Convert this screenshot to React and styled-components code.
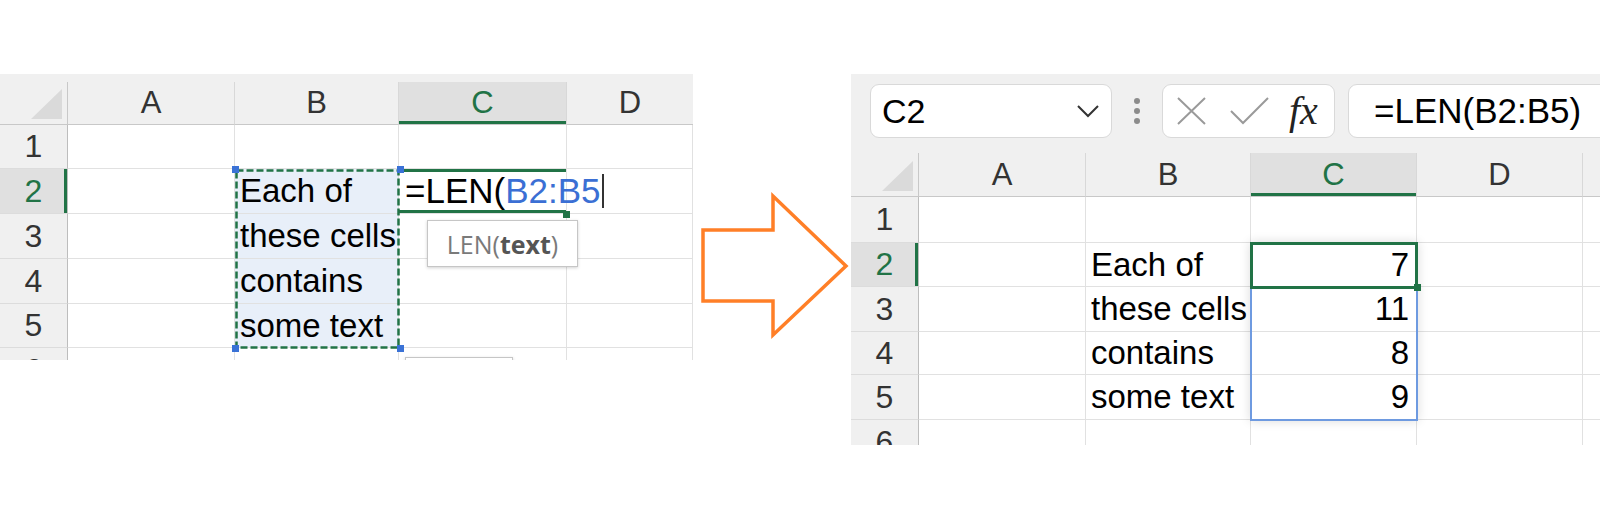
import React from "react";
import styled, { createGlobalStyle, css } from "styled-components";

const GlobalStyle = createGlobalStyle`
  *, *::before, *::after { box-sizing: border-box; }
  html, body { margin: 0; padding: 0; background: #fff; }
  body { font-family: "Liberation Sans", Arial, sans-serif; }
`;

const GREEN = "#217346";
const HEAD_BG = "#f0f0f0";
const GRID = "#e1e1e1";

const Page = styled.div`
  width: 1600px;
  height: 520px;
  display: flex;
  align-items: flex-start;
  padding-top: 74px;
  overflow: hidden;
`;

const LeftPanel = styled.div`
  width: 693px;
  flex: none;
`;

const Strip = styled.div`
  height: 8px;
  background: ${HEAD_BG};
`;

const Sheet = styled.div`
  position: relative;
  display: grid;
  grid-template-columns: ${(p) => p.$cols};
  grid-template-rows: ${(p) => p.$rows};
  height: ${(p) => p.$height}px;
  overflow: hidden;
  background: #fff;
`;

const Corner = styled.div`
  position: relative;
  background: ${HEAD_BG};
  border-right: 1px solid #c8c8c8;
  border-bottom: 1px solid #c8c8c8;
  &::after {
    content: "";
    position: absolute;
    right: 5px;
    bottom: 5px;
    width: 31px;
    height: 30px;
    background: #dadada;
    clip-path: polygon(100% 0, 100% 100%, 0 100%);
  }
`;

const ColHead = styled.div`
  display: flex;
  align-items: center;
  justify-content: center;
  font-size: 31px;
  color: #333;
  background: ${HEAD_BG};
  border-right: 1px solid #d8d8d8;
  border-bottom: 1px solid #c8c8c8;
  ${(p) =>
    p.$active &&
    css`
      background: #e0e0e0;
      color: ${GREEN};
      box-shadow: inset 0 -3px 0 ${GREEN};
    `}
  ${(p) => p.$last && css`border-right: none;`}
`;

const RowHead = styled.div`
  display: flex;
  align-items: center;
  justify-content: center;
  font-size: 32px;
  color: #333;
  background: ${HEAD_BG};
  border-right: 1px solid #bdbdbd;
  border-bottom: 1px solid #dcdcdc;
  ${(p) =>
    p.$active &&
    css`
      background: #e0e0e0;
      color: ${GREEN};
      box-shadow: inset -3px 0 0 ${GREEN};
    `}
`;

const Cell = styled.div`
  display: flex;
  align-items: center;
  justify-content: ${(p) => (p.$right ? "flex-end" : "flex-start")};
  padding: 0 7px 0 5px;
  font-size: 33px;
  color: #000;
  white-space: nowrap;
  background: ${(p) => (p.$tint ? "#e8eff9" : "transparent")};
  border-right: 1px solid ${GRID};
  border-bottom: 1px solid ${GRID};
  ${(p) =>
    p.$editing &&
    css`
      position: relative;
      z-index: 1;
      padding-left: 6px;
      box-shadow: inset 0 3px 0 ${GREEN}, inset 0 -3px 0 ${GREEN};
    `}
`;

const Formula = styled.span`
  display: inline-flex;
  flex: none;
  align-items: center;
  font-size: 35px;
  color: #000;
`;

const Ref = styled.span`
  color: #3b6fd4;
`;

const Caret = styled.span`
  display: inline-block;
  width: 2px;
  height: 34px;
  margin-left: 1px;
  background: #333;
`;

const Ants = styled.svg`
  position: absolute;
  left: ${(p) => p.$x}px;
  top: ${(p) => p.$y}px;
  overflow: visible;
  z-index: 2;
`;

const Handle = styled.div`
  position: absolute;
  z-index: 3;
  left: ${(p) => p.$x - 3}px;
  top: ${(p) => p.$y - 3}px;
  width: 7px;
  height: 7px;
  background: ${(p) => p.$color};
`;

const Tooltip = styled.div`
  position: absolute;
  z-index: 2;
  left: ${(p) => p.$x}px;
  top: ${(p) => p.$y}px;
  width: ${(p) => p.$w}px;
  height: ${(p) => p.$h}px;
  display: flex;
  align-items: center;
  justify-content: center;
  background: #fff;
  border: 1px solid #c6c6c6;
  box-shadow: 0 1px 3px rgba(0, 0, 0, 0.18);
  font-family: "Open Sans", "Noto Sans", sans-serif;
  font-size: 25px;
  color: #7a7a7a;
  b {
    color: #555;
    font-weight: 700;
  }
`;

/* ---------- right side ---------- */

const RightPanel = styled.div`
  flex: 1;
  min-width: 0;
  margin-left: 158px;
  overflow: hidden;
  background: ${HEAD_BG};
`;

const FormulaBar = styled.div`
  height: 79px;
  display: flex;
  align-items: flex-start;
  padding: 10px 0 0 19px;
`;

const Box = styled.div`
  height: 54px;
  flex: none;
  display: flex;
  align-items: center;
  background: #fff;
  border: 1px solid #d9d9d9;
  border-radius: 9px;
`;

const NameBox = styled(Box)`
  width: 242px;
  justify-content: space-between;
  padding: 0 12px 0 11px;
  font-size: 34px;
  color: #000;
`;

const Dots = styled.div`
  width: 50px;
  height: 54px;
  flex: none;
  display: flex;
  flex-direction: column;
  align-items: center;
  justify-content: center;
  gap: 4px;
  span {
    width: 6px;
    height: 6px;
    border-radius: 50%;
    background: #8c8c8c;
  }
`;

const FxBox = styled(Box)`
  width: 173px;
  padding: 0 0 0 14px;
`;

const Fx = styled.span`
  margin-left: 20px;
  font-family: "Liberation Serif", "Times New Roman", serif;
  font-style: italic;
  font-size: 40px;
  color: #222;
  line-height: 1;
`;

const InputBox = styled(Box)`
  flex: 1;
  margin: 0 -20px 0 13px;
  padding-left: 25px;
  font-size: 35px;
  color: #000;
`;

const RangeBox = styled.div`
  position: absolute;
  left: ${(p) => p.$x}px;
  top: ${(p) => p.$y}px;
  width: ${(p) => p.$w}px;
  height: ${(p) => p.$h}px;
  border: 2px solid #6e9ae0;
  box-shadow: 0 0 10px rgba(0, 0, 0, 0.14);
`;

const ActiveBox = styled.div`
  position: absolute;
  left: ${(p) => p.$x}px;
  top: ${(p) => p.$y}px;
  width: ${(p) => p.$w}px;
  height: ${(p) => p.$h}px;
  border: 3px solid ${GREEN};
`;

const ArrowWrap = styled.svg`
  flex: none;
  margin-right: -158px;
`;

const Arrow = () => (
  <ArrowWrap width="158" height="290">
    <polygon
      points="10,156 80,156 80,122 153,192 80,261 80,227 10,227"
      fill="#fff"
      stroke="#ff7f27"
      strokeWidth="3.5"
    />
  </ArrowWrap>
);

const words = ["Each of", "these cells", "contains", "some text"];
const counts = [7, 11, 8, 9];

function LeftSheet() {
  return (
    <LeftPanel>
      <Strip />
      <Sheet
        $cols="68px 167px 164px 168px 126px"
        $rows="43px 44px 45px 45px 45px 44px 45px"
        $height={278}
      >
        <Corner />
        {["A", "B", "C", "D"].map((c) => (
          <ColHead key={c} $active={c === "C"} $last={c === "D"}>
            {c}
          </ColHead>
        ))}
        {[1, 2, 3, 4, 5, 6].map((r) => (
          <React.Fragment key={r}>
            <RowHead $active={r === 2}>{r}</RowHead>
            <Cell />
            <Cell $tint={r >= 2 && r <= 5}>{words[r - 2]}</Cell>
            {r === 2 ? (
              <Cell $editing>
                <Formula>
                  =LEN(<Ref>B2:B5</Ref>
                  <Caret />
                </Formula>
              </Cell>
            ) : (
              <Cell />
            )}
            <Cell />
          </React.Fragment>
        ))}

        <Ants $x={235} $y={87} width="165" height="180">
          <rect
            x="1.5"
            y="1.5"
            width="162"
            height="177"
            fill="none"
            stroke={GREEN}
            strokeWidth="2.5"
            strokeDasharray="7 3"
          />
        </Ants>
        <Handle $x={235} $y={87} $color="#3a72d6" />
        <Handle $x={400} $y={87} $color="#3a72d6" />
        <Handle $x={235} $y={266} $color="#3a72d6" />
        <Handle $x={400} $y={266} $color="#3a72d6" />
        <Handle $x={566} $y={132} $color={GREEN} />

        <Tooltip $x={427} $y={138} $w={151} $h={47}>
          LEN(<b>text</b>)
        </Tooltip>
        <Tooltip $x={405} $y={275} $w={108} $h={30} />
      </Sheet>
    </LeftPanel>
  );
}

function RightSheet() {
  return (
    <RightPanel>
      <FormulaBar>
        <NameBox>
          C2
          <svg width="22" height="13" viewBox="0 0 22 13">
            <polyline points="1,1 11,11 21,1" fill="none" stroke="#333" strokeWidth="2" />
          </svg>
        </NameBox>
        <Dots>
          <span />
          <span />
          <span />
        </Dots>
        <FxBox>
          <svg width="29" height="28" viewBox="0 0 29 28">
            <path d="M1 1 L28 27 M28 1 L1 27" stroke="#9a9a9a" strokeWidth="2" />
          </svg>
          <svg width="39" height="28" viewBox="0 0 39 28" style={{ marginLeft: 24 }}>
            <polyline points="1,14 13,26 38,1" fill="none" stroke="#9a9a9a" strokeWidth="2" />
          </svg>
          <Fx>fx</Fx>
        </FxBox>
        <InputBox>=LEN(B2:B5)</InputBox>
      </FormulaBar>
      <Sheet
        $cols="68px 167px 165px 166px 166px 40px"
        $rows="44px 46px 44px 45px 43px 45px 45px"
        $height={292}
      >
        <Corner />
        {["A", "B", "C", "D", ""].map((c, i) => (
          <ColHead key={i} $active={c === "C"}>
            {c}
          </ColHead>
        ))}
        {[1, 2, 3, 4, 5, 6].map((r) => (
          <React.Fragment key={r}>
            <RowHead $active={r === 2}>{r}</RowHead>
            <Cell />
            <Cell>{words[r - 2]}</Cell>
            <Cell $right>{counts[r - 2]}</Cell>
            <Cell />
            <Cell />
          </React.Fragment>
        ))}
        <RangeBox $x={399} $y={89} $w={168} $h={179} />
        <ActiveBox $x={399} $y={89} $w={168} $h={47} />
        <Handle $x={566} $y={134} $color={GREEN} />
      </Sheet>
    </RightPanel>
  );
}

export default function App() {
  return (
    <>
      <GlobalStyle />
      <Page>
        <LeftSheet />
        <Arrow />
        <RightSheet />
      </Page>
    </>
  );
}
